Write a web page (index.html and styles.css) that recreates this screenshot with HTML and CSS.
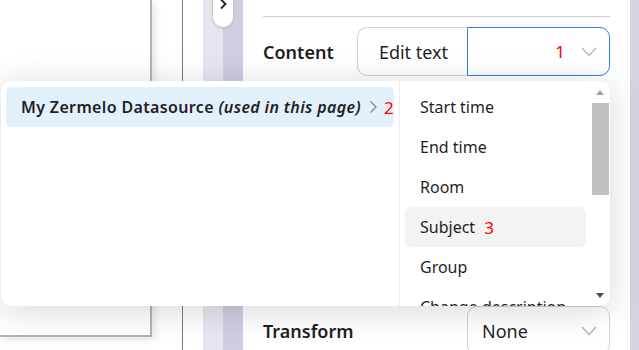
FILE: index.html
```html
<!DOCTYPE html>
<html lang="en">
<head>
  <meta charset="UTF-8">
  <meta name="viewport" content="width=device-width, initial-scale=1.0">
  <title>Field editor</title>
  <link rel="stylesheet" href="styles.css">
</head>
<body>
  <div class="page">
    <div class="side">
      <div class="side-box"></div>
    </div>
    <div class="gutter"></div>
    <div class="rail">
      <div class="rail-light"></div>
      <div class="rail-dark"></div>
      <button class="toggle" title="Expand">
        <svg width="10" height="12" viewBox="0 0 10 12"><path d="M3 1.5 L7.5 6 L3 10.5" fill="none" stroke="#222" stroke-width="1.8"/></svg>
      </button>
    </div>

    <main class="panel">
      <div class="rule"></div>

      <div class="field">
        <span class="label">Content</span>
        <div class="seg">
          <span class="seg-btn">Edit text</span>
          <div class="select active">
            <span class="num">1</span>
            <svg class="chev" width="16" height="10" viewBox="0 0 16 10"><path d="M1 1 L8 8.5 L15 1" fill="none" stroke="#b5b5b5" stroke-width="1.3"/></svg>
          </div>
        </div>
      </div>

      <div class="field field-bottom">
        <span class="label">Transform</span>
        <div class="select">
          <span class="value">None</span>
          <svg class="chev" width="16" height="10" viewBox="0 0 16 10"><path d="M1 1 L8 8.5 L15 1" fill="none" stroke="#b5b5b5" stroke-width="1.3"/></svg>
        </div>
      </div>
    </main>
    <div class="edge"></div>
  </div>

  <!-- cascading source picker -->
  <div class="popup">
    <div class="sources">
      <div class="source current">
        <span class="source-name">My Zermelo Datasource <em>(used in this page)</em></span>
        <svg class="arrow" width="9" height="14" viewBox="0 0 9 14"><path d="M1.5 1.5 L7 7 L1.5 12.5" fill="none" stroke="#888" stroke-width="1.3"/></svg>
        <span class="num">2</span>
      </div>
    </div>
    <div class="fields">
      <ul class="field-list">
        <li>Start time</li>
        <li>End time</li>
        <li>Room</li>
        <li class="hover">Subject <span class="num">3</span></li>
        <li>Group</li>
        <li>Change description</li>
      </ul>
      <div class="scrollbar">
        <span class="sb-up"></span>
        <span class="sb-thumb"></span>
        <span class="sb-down"></span>
      </div>
    </div>
  </div>
</body>
</html>
```

FILE: styles.css
```css
/* Reset and basic styling */
* {
  margin: 0;
  padding: 0;
  box-sizing: border-box;
}

body {
  font-family: "Noto Sans", "Open Sans", Arial, sans-serif;
  color: #1f1f1f;
  background: #fff;
  width: 639px;
  height: 350px;
  overflow: hidden;
  position: relative;
}

.page {
  display: flex;
  height: 350px;
}

/* left canvas */
.side {
  width: 182px;
  background: #fff;
}

.side-box {
  width: 152px;
  height: 337px;
  border-right: 2px solid #b4b4b4;
  border-bottom: 2px solid #b4b4b4;
  background: #fff;
  box-shadow: 2px 2px 8px rgba(0, 0, 0, 0.12);
}

.gutter {
  width: 21px;
  border-left: 1px solid #7a7a7a;
  background: #fff;
}

.rail {
  width: 40px;
  display: flex;
  position: relative;
}

.rail-light {
  width: 20px;
  background: #e6e6ef;
}

.rail-dark {
  width: 20px;
  background: #cfcde0;
}

.toggle {
  position: absolute;
  left: 9px;
  top: -12px;
  width: 22px;
  height: 40px;
  background: #fff;
  border: 1px solid #c8c8c8;
  border-radius: 11px;
  display: flex;
  align-items: flex-end;
  justify-content: center;
  padding-bottom: 17px;
  box-shadow: 0 1px 2px rgba(0, 0, 0, 0.1);
}

/* properties panel */
.panel {
  width: 387px;
  padding: 16px 20px 0 20px;
  background: #fff;
}

.rule {
  height: 1px;
  background: #cfcfcf;
  margin-bottom: 10px;
}

.field {
  display: flex;
  align-items: center;
  justify-content: space-between;
}

.label {
  font-size: 18px;
  font-weight: 600;
}

.field-bottom {
  margin-top: 230px;
}

.seg {
  display: flex;
  width: 253px;
  height: 49px;
}

.seg-btn {
  width: 110px;
  display: flex;
  align-items: center;
  justify-content: center;
  font-size: 18px;
  border: 1px solid #d2d2d2;
  border-right: none;
  border-radius: 10px 0 0 10px;
  padding-left: 2px;
}

.select {
  width: 143px;
  height: 49px;
  display: flex;
  align-items: center;
  border: 1px solid #d2d2d2;
  border-radius: 10px;
  padding: 0 12px 0 14px;
  font-size: 18px;
}

.seg .select {
  border-radius: 0 10px 10px 0;
}

.select.active {
  border: 1.5px solid #2f7fe6;
  justify-content: flex-end;
}

.select .value {
  flex: 1;
}

.select .num {
  margin-right: 16px;
}

.num {
  color: #ff0000;
  font-size: 17px;
  font-weight: 400;
  font-style: normal;
  letter-spacing: 0;
}

.edge {
  width: 9px;
  background: #d4d2e4;
}

/* popup */
.popup {
  position: absolute;
  left: 1px;
  top: 81px;
  width: 609px;
  height: 225px;
  background: #fff;
  border-radius: 10px;
  box-shadow: 0 4px 34px rgba(0, 0, 0, 0.16);
  display: flex;
  overflow: hidden;
}

.sources {
  width: 399px;
  border-right: 1px solid #ececec;
  padding: 6px 5px;
}

.source {
  height: 40px;
  display: flex;
  align-items: center;
  padding-left: 15px;
  border-radius: 5px;
  font-size: 16px;
  font-weight: 600;
}

.source-name {
  letter-spacing: 0.35px;
}

.source.current {
  background: #e3f1fc;
}

.source em {
  font-style: italic;
}

.source .arrow {
  margin-left: 8px;
  margin-right: 6px;
}

.fields {
  flex: 1;
  display: flex;
}

.field-list {
  list-style: none;
  width: 192px;
  padding: 6px 6px 0 5px;
}

.field-list li {
  height: 40px;
  display: flex;
  align-items: center;
  padding-left: 15px;
  font-size: 16px;
  white-space: nowrap;
  border-radius: 6px;
}

.field-list li.hover {
  background: #f3f3f3;
}

.field-list li .num {
  margin-left: 9px;
}

.scrollbar {
  width: 17px;
  position: relative;
  background: #fff;
}

.sb-up,
.sb-down {
  position: absolute;
  left: 4px;
  width: 0;
  height: 0;
  border-left: 4.5px solid transparent;
  border-right: 4.5px solid transparent;
}

.sb-up {
  top: 9px;
  border-bottom: 5px solid #a3a3a3;
}

.sb-down {
  top: 212px;
  border-top: 5px solid #505050;
}

.sb-thumb {
  position: absolute;
  left: 0;
  top: 22px;
  width: 17px;
  height: 92px;
  background: #c1c1c1;
}
```
